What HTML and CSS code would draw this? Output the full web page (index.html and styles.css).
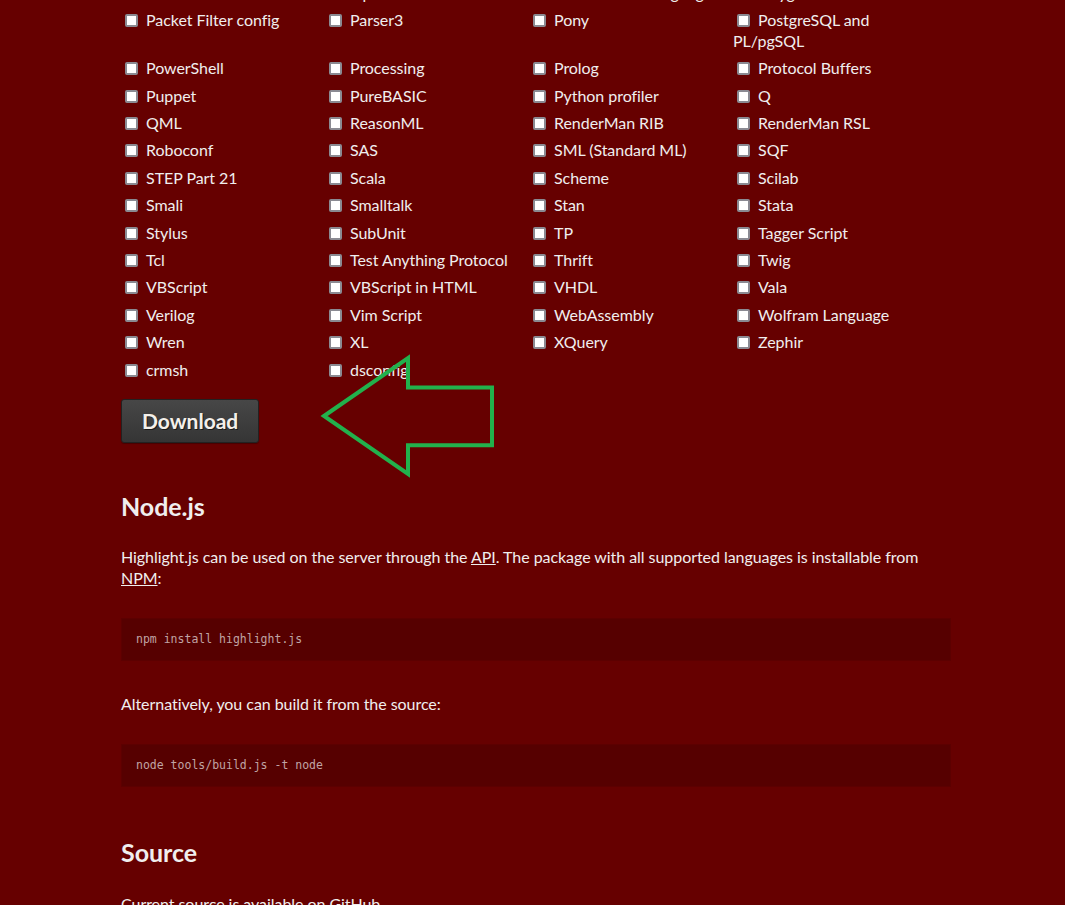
FILE: index.html
```html
<!DOCTYPE html>
<html>
<head>
<title>highlight.js - download</title>
<meta charset='utf-8'/>
<link rel="stylesheet" href="styles.css">
</head>
<body>
<div class="page">
	<form class="download">
		<ul class="langs">
			<li><input type="checkbox">OCaml</li>
			<li><input type="checkbox">OpenSCAD</li>
			<li><input type="checkbox">Oracle Rules Language</li>
			<li><input type="checkbox">Oxygene</li>
			<li><input type="checkbox">Packet Filter config</li>
			<li><input type="checkbox">Parser3</li>
			<li><input type="checkbox">Pony</li>
			<li><input type="checkbox">PostgreSQL and PL/pgSQL</li>
			<li><input type="checkbox">PowerShell</li>
			<li><input type="checkbox">Processing</li>
			<li><input type="checkbox">Prolog</li>
			<li><input type="checkbox">Protocol Buffers</li>
			<li><input type="checkbox">Puppet</li>
			<li><input type="checkbox">PureBASIC</li>
			<li><input type="checkbox">Python profiler</li>
			<li><input type="checkbox">Q</li>
			<li><input type="checkbox">QML</li>
			<li><input type="checkbox">ReasonML</li>
			<li><input type="checkbox">RenderMan RIB</li>
			<li><input type="checkbox">RenderMan RSL</li>
			<li><input type="checkbox">Roboconf</li>
			<li><input type="checkbox">SAS</li>
			<li><input type="checkbox">SML (Standard ML)</li>
			<li><input type="checkbox">SQF</li>
			<li><input type="checkbox">STEP Part 21</li>
			<li><input type="checkbox">Scala</li>
			<li><input type="checkbox">Scheme</li>
			<li><input type="checkbox">Scilab</li>
			<li><input type="checkbox">Smali</li>
			<li><input type="checkbox">Smalltalk</li>
			<li><input type="checkbox">Stan</li>
			<li><input type="checkbox">Stata</li>
			<li><input type="checkbox">Stylus</li>
			<li><input type="checkbox">SubUnit</li>
			<li><input type="checkbox">TP</li>
			<li><input type="checkbox">Tagger Script</li>
			<li><input type="checkbox">Tcl</li>
			<li><input type="checkbox">Test Anything Protocol</li>
			<li><input type="checkbox">Thrift</li>
			<li><input type="checkbox">Twig</li>
			<li><input type="checkbox">VBScript</li>
			<li><input type="checkbox">VBScript in HTML</li>
			<li><input type="checkbox">VHDL</li>
			<li><input type="checkbox">Vala</li>
			<li><input type="checkbox">Verilog</li>
			<li><input type="checkbox">Vim Script</li>
			<li><input type="checkbox">WebAssembly</li>
			<li><input type="checkbox">Wolfram Language</li>
			<li><input type="checkbox">Wren</li>
			<li><input type="checkbox">XL</li>
			<li><input type="checkbox">XQuery</li>
			<li><input type="checkbox">Zephir</li>
			<li><input type="checkbox">crmsh</li>
			<li><input type="checkbox">dsconfig</li>
		</ul>
		<div class="actions">
			<button type="button" class="btn">Download</button>
		</div>
	</form>

	<h2>Node.js</h2>
	<p>Highlight.js can be used on the server through the <a href="#">API</a>. The package with all supported languages is installable from <a href="#">NPM</a>:</p>
	<pre><code>npm install highlight.js</code></pre>
	<p>Alternatively, you can build it from the source:</p>
	<pre><code>node tools/build.js -t node</code></pre>

	<h2>Source</h2>
	<p>Current source is available on GitHub.</p>
</div>

<!-- стрелка поверх страницы -->
<svg class="arrow" width="180" height="128" viewBox="0 0 180 128">
	<polygon points="6,64 90,6 90,35.5 174,35.5 174,93.3 90,93.3 90,122" fill="none" stroke="#22b14c" stroke-width="4"/>
</svg>
</body>
</html>
```

FILE: styles.css
```css
html, body {
	margin: 0;
	padding: 0;
	background: #660000;
}
body {
	position: relative;
	color: #f0eeee;
	font-family: Lato, "Noto Sans", sans-serif;
	font-size: 16px;
	line-height: 21px;
	letter-spacing: -0.05px;
	overflow: hidden;
}
.page {
	width: 830px;
	margin-left: 121px;
}
.download {
	margin: 0;
}
.langs {
	list-style: none;
	margin: -18.5px 0 0 0;
	padding: 0;
	display: grid;
	grid-template-columns: repeat(4, 204px);
	row-gap: 6.4px;
}
.langs li {
	line-height: 21px;
}
.langs input {
	-webkit-appearance: none;
	appearance: none;
	box-sizing: border-box;
	width: 13px;
	height: 13px;
	margin: 0 8px 0 4px;
	vertical-align: -1px;
	background: #fff;
	border: 2px solid #8a8a92;
	border-radius: 2px;
}
.actions {
	display: flex;
	margin-top: 19px;
}
.btn {
	font-family: Lato, "Noto Sans", sans-serif;
	font-size: 21px;
	font-weight: bold;
	line-height: 24px;
	color: #f4f0ea;
	padding: 9px 20px;
	border: 1px solid #222;
	border-radius: 3px;
	background: linear-gradient(#474747, #353535);
	text-shadow: 1px 1px 0 #1a1a1a;
	box-shadow: 0 1px 1px rgba(0,0,0,0.3);
}
h2 {
	font-size: 25px;
	line-height: 32px;
	font-weight: bold;
	margin: 49px 0 24.5px;
}
.download + h2 {
	margin-top: 47px;
}
p {
	margin: 0 0 30px;
}
a {
	color: inherit;
	text-decoration: underline;
}
pre {
	margin: 0 0 32px;
	padding: 13px 14px;
	background: #560000;
	border: 1px solid #5c0000;
	font-family: "DejaVu Sans Mono", "Liberation Mono", monospace;
	font-size: 11.5px;
	line-height: 15px;
	letter-spacing: 0;
	color: #c0a4a4;
}
.arrow {
	position: absolute;
	left: 318px;
	top: 352px;
}
```
